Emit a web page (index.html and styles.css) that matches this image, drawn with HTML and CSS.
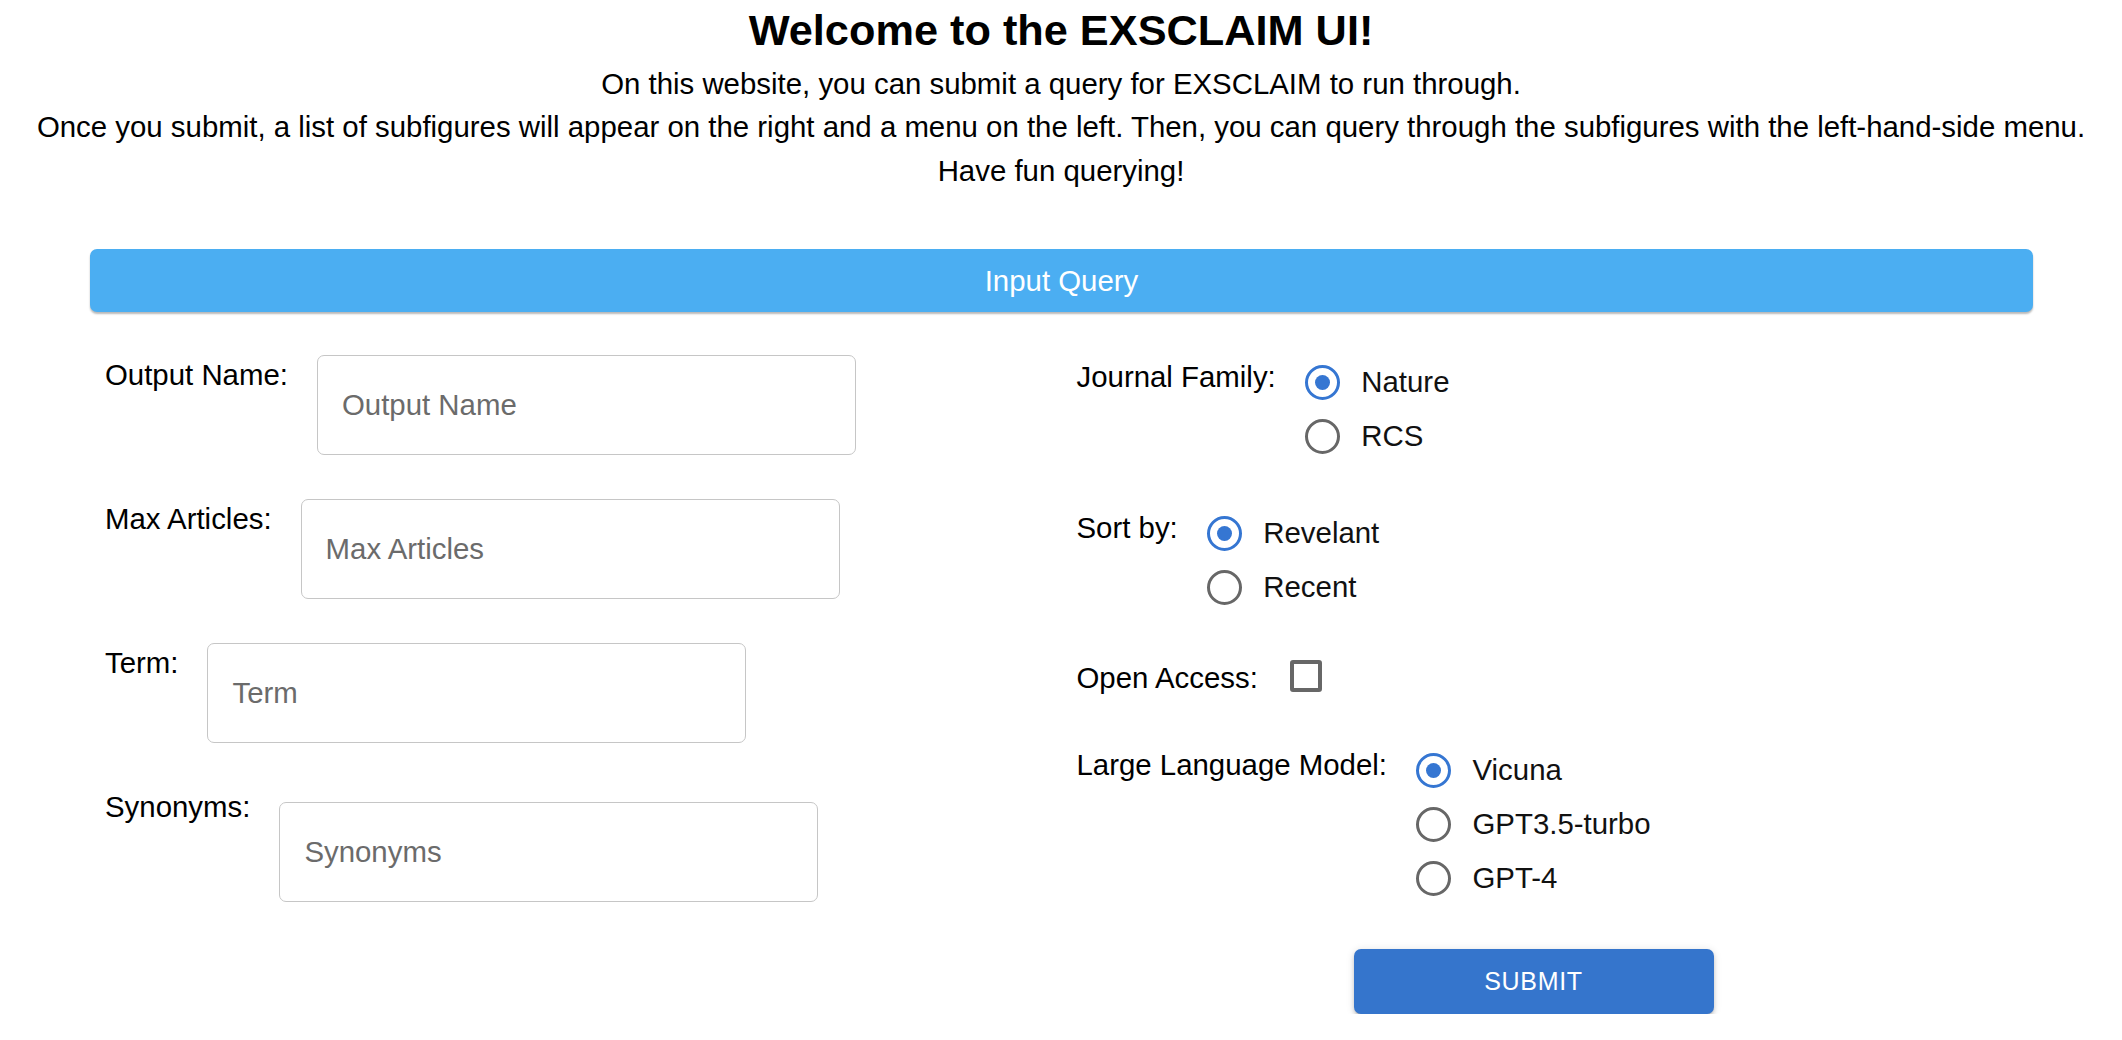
FILE: index.html
```html
<!DOCTYPE html>
<html lang="en">
<head>
<meta charset="utf-8">
<title>EXSCLAIM UI</title>
<link rel="stylesheet" href="styles.css">
</head>
<body>
<header class="intro">
  <h1 class="title">Welcome to the EXSCLAIM UI!</h1>
  <p class="lead">On this website, you can submit a query for EXSCLAIM to run through.<br>Once you submit, a list of subfigures will appear on the right and a menu on the left. Then, you can query through the subfigures with the left-hand-side menu.<br>Have fun querying!</p>
</header>
<main class="panel">
  <div class="panel-head">Input Query</div>
  <form class="query-form">
    <div class="col col-left">
      <div class="field">
        <label class="field-label">Output Name:</label>
        <input class="text-input" type="text" placeholder="Output Name">
      </div>
      <div class="field">
        <label class="field-label">Max Articles:</label>
        <input class="text-input" type="text" placeholder="Max Articles">
      </div>
      <div class="field">
        <label class="field-label">Term:</label>
        <input class="text-input" type="text" placeholder="Term">
      </div>
      <div class="field field--offset">
        <label class="field-label">Synonyms:</label>
        <input class="text-input" type="text" placeholder="Synonyms">
      </div>
    </div>
    <div class="col col-right">
      <div class="group">
        <div class="group-label">Journal Family:</div>
        <div class="options">
          <div class="option"><span class="radio radio--checked"></span>Nature</div>
          <div class="option"><span class="radio"></span>RCS</div>
        </div>
      </div>
      <div class="group">
        <div class="group-label">Sort by:</div>
        <div class="options">
          <div class="option"><span class="radio radio--checked"></span>Revelant</div>
          <div class="option"><span class="radio"></span>Recent</div>
        </div>
      </div>
      <div class="group group--check">
        <div class="group-label group-label--check">Open Access:</div>
        <span class="checkbox"></span>
      </div>
      <div class="group">
        <div class="group-label">Large Language Model:</div>
        <div class="options">
          <div class="option"><span class="radio radio--checked"></span>Vicuna</div>
          <div class="option"><span class="radio"></span>GPT3.5-turbo</div>
          <div class="option"><span class="radio"></span>GPT-4</div>
        </div>
      </div>
      <button class="submit" type="button">Submit</button>
    </div>
  </form>
</main>
</body>
</html>
```
FILE: styles.css
```css
body {
  margin: 0;
  font-family: "Liberation Sans", Arial, Helvetica, sans-serif;
  color: #000;
  background: #fff;
}

.intro {
  text-align: center;
}

.title {
  font-size: 43.3px;
  font-weight: 700;
  line-height: 1.15;
  margin: 6px 0 0;
}

.lead {
  font-size: 29.4px;
  line-height: 43.5px;
  margin: 6px 0 0;
}

.panel {
  margin: 57px 89px 0 90px;
}

.panel-head {
  height: 63px;
  background: #4baef2;
  color: #fff;
  font-size: 29.4px;
  display: flex;
  align-items: center;
  justify-content: center;
  border-radius: 7px;
  box-shadow: 0 2px 2px rgba(0, 0, 0, 0.28);
}

.query-form {
  display: grid;
  grid-template-columns: 1fr 1fr;
  margin-top: 43px;
}

.col {
  padding: 0 15px;
  display: flex;
  flex-direction: column;
}

.col-left {
  gap: 44px;
}

.field {
  display: flex;
  align-items: flex-start;
}

.field-label {
  font-size: 29.4px;
  line-height: 33px;
  margin-top: 3px;
  white-space: nowrap;
}

.text-input {
  box-sizing: border-box;
  width: 539px;
  height: 100px;
  margin: 0 0 0 29px;
  border: 1.5px solid #c6c6c6;
  border-radius: 7px;
  padding: 0 24px;
  font: 29.4px "Liberation Sans", Arial, sans-serif;
  color: #000;
  background: #fff;
  outline: none;
}

.text-input::placeholder {
  color: #6b6b6b;
  opacity: 1;
}

.field--offset .text-input {
  margin-top: 15px;
}

.col-right {
  gap: 43px;
}

.group {
  display: flex;
  align-items: flex-start;
}

.group-label {
  font-size: 29.4px;
  line-height: 33px;
  margin-top: 5px;
  white-space: nowrap;
}

.options {
  margin-left: 29px;
  display: flex;
  flex-direction: column;
}

.option {
  height: 54px;
  display: flex;
  align-items: center;
  font-size: 29.4px;
  color: #111;
  white-space: nowrap;
}

.radio {
  box-sizing: border-box;
  width: 35px;
  height: 35px;
  flex: none;
  border: 3.5px solid #676767;
  border-radius: 50%;
  margin-right: 21.5px;
  display: flex;
  align-items: center;
  justify-content: center;
}

.radio--checked {
  border-color: #3576d2;
}

.radio--checked::after {
  content: "";
  width: 15px;
  height: 15px;
  border-radius: 50%;
  background: #3576d2;
}

.group--check {
  margin-bottom: 6px;
}

.group-label--check {
  margin-top: 4px;
}

.checkbox {
  box-sizing: border-box;
  width: 32px;
  height: 32px;
  margin: 3px 0 0 32px;
  border: 4px solid #676767;
  border-radius: 3px;
  flex: none;
}

.submit {
  align-self: flex-start;
  margin: 1px 0 0 277px;
  width: 360px;
  height: 65px;
  border: none;
  border-radius: 7px;
  background: #3575cc;
  color: #fff;
  font: 25px "Liberation Sans", Arial, sans-serif;
  letter-spacing: 0.7px;
  text-transform: uppercase;
  box-shadow: 0 3px 3px -2px rgba(0, 0, 0, 0.2), 0 3px 4px 0 rgba(0, 0, 0, 0.14), 0 1px 8px 0 rgba(0, 0, 0, 0.12);
  cursor: pointer;
}
```
